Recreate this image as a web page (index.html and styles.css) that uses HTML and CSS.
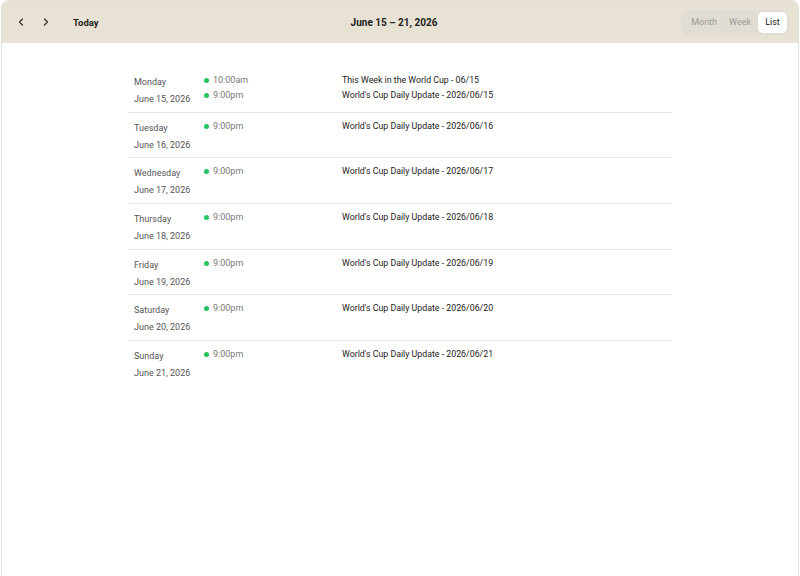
FILE: index.html
```html
<!DOCTYPE html>
<html lang="en">
<head>
  <meta charset="UTF-8" />
  <meta name="viewport" content="width=device-width, initial-scale=1.0"/>
  <title>World Cup Calendar</title>
  <link rel="stylesheet" href="styles.css">
</head>
<body>
  <div class="calendario">
    <header class="barra">
      <div class="navegacao">
        <button class="seta" aria-label="Previous">
          <svg width="8" height="8" viewBox="0 0 8 8"><polyline points="5.5,1 2.5,4 5.5,7" fill="none" stroke="#333" stroke-width="1.3" stroke-linecap="round" stroke-linejoin="round"/></svg>
        </button>
        <button class="seta" aria-label="Next">
          <svg width="8" height="8" viewBox="0 0 8 8"><polyline points="2.5,1 5.5,4 2.5,7" fill="none" stroke="#333" stroke-width="1.3" stroke-linecap="round" stroke-linejoin="round"/></svg>
        </button>
        <button class="hoje">Today</button>
      </div>
      <h1 class="titulo">June 15 – 21, 2026</h1>
      <div class="visoes">
        <button class="visao">Month</button>
        <button class="visao">Week</button>
        <button class="visao ativa">List</button>
      </div>
    </header>

    <ul class="lista" id="lista"></ul>
  </div>

  <script>
    // Dias da semana com seus eventos
    const dias = [
      { nome: 'Monday', data: 'June 15, 2026', eventos: [
        { hora: '10:00am', titulo: 'This Week in the World Cup - 06/15' },
        { hora: '9:00pm', titulo: "World's Cup Daily Update - 2026/06/15" }
      ]},
      { nome: 'Tuesday', data: 'June 16, 2026', eventos: [{ hora: '9:00pm', titulo: "World's Cup Daily Update - 2026/06/16" }]},
      { nome: 'Wednesday', data: 'June 17, 2026', eventos: [{ hora: '9:00pm', titulo: "World's Cup Daily Update - 2026/06/17" }]},
      { nome: 'Thursday', data: 'June 18, 2026', eventos: [{ hora: '9:00pm', titulo: "World's Cup Daily Update - 2026/06/18" }]},
      { nome: 'Friday', data: 'June 19, 2026', eventos: [{ hora: '9:00pm', titulo: "World's Cup Daily Update - 2026/06/19" }]},
      { nome: 'Saturday', data: 'June 20, 2026', eventos: [{ hora: '9:00pm', titulo: "World's Cup Daily Update - 2026/06/20" }]},
      { nome: 'Sunday', data: 'June 21, 2026', eventos: [{ hora: '9:00pm', titulo: "World's Cup Daily Update - 2026/06/21" }]}
    ];

    const lista = document.getElementById('lista');

    dias.forEach(dia => {
      const li = document.createElement('li');
      li.className = 'dia';
      li.innerHTML = `
        <div class="dia-info">
          <div class="dia-nome">${dia.nome}</div>
          <div class="dia-data">${dia.data}</div>
        </div>
        <div class="eventos">
          ${dia.eventos.map(ev => `
            <div class="evento">
              <span class="hora"><span class="ponto"></span>${ev.hora}</span>
              <span class="evento-titulo">${ev.titulo}</span>
            </div>`).join('')}
        </div>
      `;
      lista.appendChild(li);
    });
  </script>
</body>
</html>
```

FILE: styles.css
```css
* {
  box-sizing: border-box;
}

html, body {
  height: 100%;
}

body {
  margin: 0;
  padding: 0 1px;
  font-family: Roboto, 'Noto Sans', sans-serif;
  background: #ffffff;
  color: #222;
}

button {
  font-family: inherit;
  border: none;
  background: none;
  cursor: pointer;
  padding: 0;
}

.calendario {
  min-height: 100%;
  border: 1px solid #e2e0da;
  border-bottom: none;
  border-radius: 8px 8px 0 0;
  overflow: hidden;
}

.barra {
  height: 42px;
  background: #e8e2d4;
  display: grid;
  grid-template-columns: 1fr auto 1fr;
  align-items: center;
  padding: 0 9px 0 13px;
}

.navegacao {
  display: flex;
  align-items: center;
}

.seta {
  width: 12px;
  height: 16px;
  display: flex;
  align-items: center;
  justify-content: center;
  margin-right: 13px;
}

.hoje {
  font-size: 9.5px;
  font-weight: 700;
  color: #222;
  margin-left: 8px;
}

.titulo {
  margin: 0 16px 0 0;
  font-size: 10px;
  font-weight: 700;
  color: #222;
}

.visoes {
  justify-self: end;
  display: flex;
  background: #e1ddd4;
  border-radius: 6px;
  padding: 2px;
  height: 25px;
}

.visao {
  font-size: 9px;
  color: #9a9a9a;
  padding: 0 6px;
  border-radius: 5px;
}

.visao:first-child {
  padding-left: 8px;
}

.visao.ativa {
  background: #ffffff;
  color: #222;
  width: 29px;
  margin-left: 1px;
}

.lista {
  list-style: none;
  margin: 24px auto 0;
  padding: 0;
  width: 544px;
}

.dia {
  display: flex;
  align-items: flex-start;
  border-bottom: 1px solid #e8e8e8;
}

.dia:last-child {
  border-bottom: none;
}

.dia-info {
  width: 76px;
  padding: 6px 0 4.7px 6px;
  font-size: 9px;
  color: #555;
}

.dia-nome {
  line-height: 18px;
}

.dia-data {
  line-height: 16px;
}

.eventos {
  flex: 1;
  padding-top: 6px;
}

.evento {
  display: flex;
  line-height: 15px;
  font-size: 8.8px;
}

.hora {
  width: 138px;
  color: #777;
  font-size: 9px;
  display: flex;
  align-items: center;
}

.ponto {
  width: 5px;
  height: 5px;
  border-radius: 50%;
  background: #22c55e;
  margin-right: 4px;
}

.evento-titulo {
  color: #222;
}
```
